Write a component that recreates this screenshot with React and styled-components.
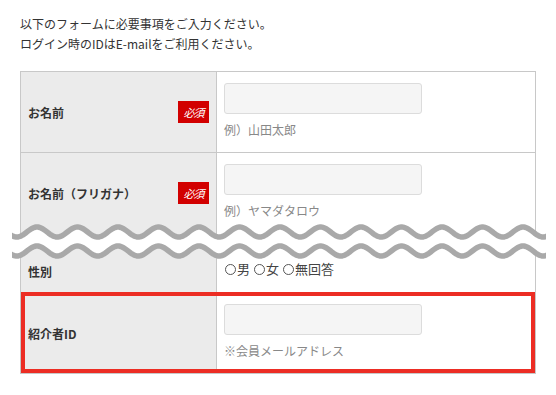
import React from 'react';
import styled, { createGlobalStyle } from 'styled-components';

const GlobalStyle = createGlobalStyle`
  body {
    margin: 0;
    background: #fff;
    font-family: "Noto Sans CJK JP", "Noto Sans", sans-serif;
    color: #333;
  }
`;

const Page = styled.div`
  width: 556px;
  height: 395px;
  padding: 14px 20px 0 20px;
  box-sizing: border-box;
  overflow: hidden;
`;

const Intro = styled.p`
  margin: 0 0 17px 0;
  font-size: 12px;
  line-height: 20px;
  color: #333;
`;

const Table = styled.div`
  border: 1px solid #c8c8c8;
  width: 516px;
  box-sizing: border-box;
`;

const Row = styled.div`
  position: relative;
  display: grid;
  grid-template-columns: 196px 1fr;
  border-top: ${(p) => (p.$first || p.$plain ? 'none' : '1px solid #c8c8c8')};

  ${(p) =>
    p.$highlight &&
    `
    &::after {
      content: '';
      position: absolute;
      top: -1px;
      left: 0;
      right: 0;
      bottom: 0;
      border: 4px solid #ec2d24;
      pointer-events: none;
    }
  `}
`;

const Label = styled.div`
  background: #ebebeb;
  border-right: 1px solid #c8c8c8;
  display: flex;
  align-items: center;
  justify-content: space-between;
  padding: 0 7px;
  font-size: 12px;
  font-weight: bold;
  color: #333;
`;

const Badge = styled.span`
  display: flex;
  align-items: center;
  justify-content: center;
  width: 31px;
  height: 22px;
  background: #d20000;
  color: #fff;
  font-size: 11px;
  font-weight: normal;
  font-style: italic;
  letter-spacing: -1px;
`;

const Value = styled.div`
  padding: ${(p) => p.$pad || '11px 7px 12px 7px'};
  background: #fff;
`;

const Input = styled.input`
  display: block;
  width: 198px;
  height: 31px;
  box-sizing: border-box;
  margin: 0;
  background: #f5f5f5;
  border: 1px solid #dcdcdc;
  border-radius: 3px;
  outline: none;
`;

const Hint = styled.div`
  margin-top: 6px;
  font-size: 12px;
  line-height: 20px;
  color: #888;
`;

const Choices = styled.div`
  display: flex;
  align-items: center;
  gap: 4px;
  font-size: 13px;
  line-height: 20px;
  color: #444;
`;

const Choice = styled.span`
  display: inline-flex;
  align-items: center;
`;

const Circle = styled.span`
  display: inline-block;
  width: 9px;
  height: 9px;
  border: 1px solid #555;
  border-radius: 50%;
  margin-right: 1px;
`;

const TearRow = styled(Row)`
  height: 17px;
`;

const TearSvg = styled.svg`
  position: absolute;
  top: -11px;
  left: -9px;
  width: 534px;
  height: 38px;
  z-index: 2;
`;

// sine points for one torn edge, crests every 40.5px
const wave = (mid, from, to, step) => {
  const pts = [];
  const dir = from < to ? 1 : -1;
  for (let x = from; dir > 0 ? x <= to : x >= to; x += step * dir) {
    const y = mid - 5 * Math.cos((2 * Math.PI * (x - 25)) / 40.5);
    pts.push(`${x},${y.toFixed(2)}`);
  }
  return pts;
};

const Tear = () => {
  const top = wave(10, -20, 560, 1);
  const bottom = wave(29, 560, -20, 1);
  return (
    <TearRow $plain>
      <Label />
      <Value $pad="0" />
      <TearSvg viewBox="0 0 534 38">
        <polygon points={[...top, ...bottom].join(' ')} fill="#fff" />
        <polyline points={top.join(' ')} fill="none" stroke="#a9a9a9" strokeWidth="5.5" />
        <polyline points={wave(29, -20, 560, 1).join(' ')} fill="none" stroke="#a9a9a9" strokeWidth="5.5" />
      </TearSvg>
    </TearRow>
  );
};

const fields = [
  { label: 'お名前', hint: '例）山田太郎' },
  { label: 'お名前（フリガナ）', hint: '例）ヤマダタロウ' },
];

export default function App() {
  return (
    <Page>
      <GlobalStyle />
      <Intro>
        以下のフォームに必要事項をご入力ください。
        <br />
        ログイン時のIDはE-mailをご利用ください。
      </Intro>
      <Table>
        {fields.map((f, i) => (
          <Row key={f.label} $first={i === 0}>
            <Label>
              {f.label}
              <Badge>必須</Badge>
            </Label>
            <Value>
              <Input type="text" />
              <Hint>{f.hint}</Hint>
            </Value>
          </Row>
        ))}
        <Tear />
        <Row $plain>
          <Label>性別</Label>
          <Value $pad="9px 7px 13px 8px">
            <Choices>
              <Choice><Circle />男</Choice>
              <Choice><Circle />女</Choice>
              <Choice><Circle />無回答</Choice>
            </Choices>
          </Value>
        </Row>
        <Row $highlight>
          <Label>紹介者ID</Label>
          <Value>
            <Input type="text" />
            <Hint>※会員メールアドレス</Hint>
          </Value>
        </Row>
      </Table>
    </Page>
  );
}
